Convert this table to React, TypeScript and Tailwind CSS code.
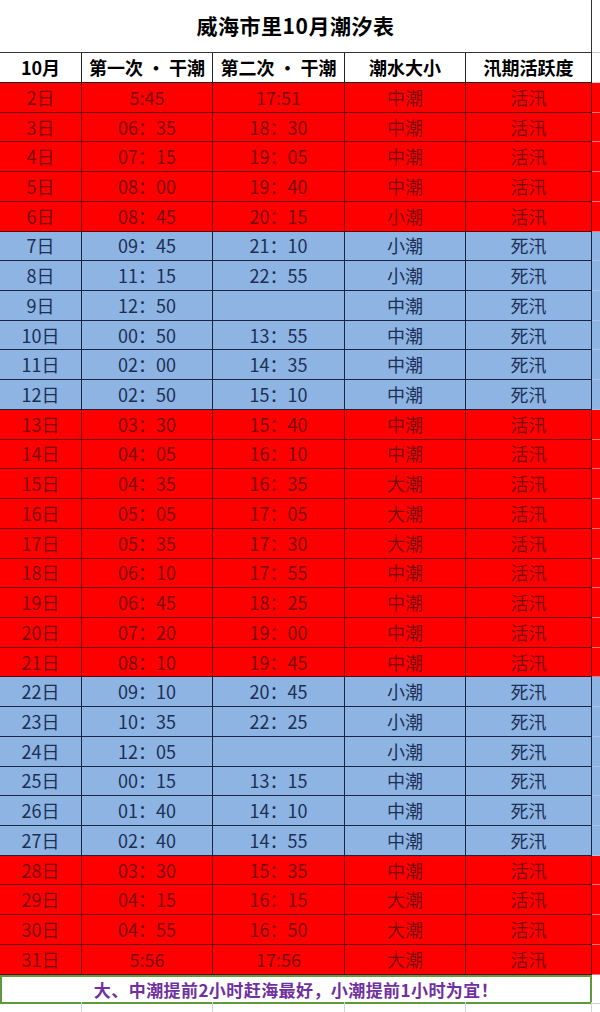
import React from "react";

type Row = [string, string, string, string, string];

const rows: Row[] = [
  ["2日", "5:45", "17:51", "中潮", "活汛"],
  ["3日", "06：35", "18：30", "中潮", "活汛"],
  ["4日", "07：15", "19：05", "中潮", "活汛"],
  ["5日", "08：00", "19：40", "中潮", "活汛"],
  ["6日", "08：45", "20：15", "小潮", "活汛"],
  ["7日", "09：45", "21：10", "小潮", "死汛"],
  ["8日", "11：15", "22：55", "小潮", "死汛"],
  ["9日", "12：50", "", "中潮", "死汛"],
  ["10日", "00：50", "13：55", "中潮", "死汛"],
  ["11日", "02：00", "14：35", "中潮", "死汛"],
  ["12日", "02：50", "15：10", "中潮", "死汛"],
  ["13日", "03：30", "15：40", "中潮", "活汛"],
  ["14日", "04：05", "16：10", "中潮", "活汛"],
  ["15日", "04：35", "16：35", "大潮", "活汛"],
  ["16日", "05：05", "17：05", "大潮", "活汛"],
  ["17日", "05：35", "17：30", "大潮", "活汛"],
  ["18日", "06：10", "17：55", "中潮", "活汛"],
  ["19日", "06：45", "18：25", "中潮", "活汛"],
  ["20日", "07：20", "19：00", "中潮", "活汛"],
  ["21日", "08：10", "19：45", "中潮", "活汛"],
  ["22日", "09：10", "20：45", "小潮", "死汛"],
  ["23日", "10：35", "22：25", "小潮", "死汛"],
  ["24日", "12：05", "", "小潮", "死汛"],
  ["25日", "00：15", "13：15", "中潮", "死汛"],
  ["26日", "01：40", "14：10", "中潮", "死汛"],
  ["27日", "02：40", "14：55", "中潮", "死汛"],
  ["28日", "03：30", "15：35", "中潮", "活汛"],
  ["29日", "04：15", "16：15", "大潮", "活汛"],
  ["30日", "04：55", "16：50", "大潮", "活汛"],
  ["31日", "5:56", "17:56", "大潮", "活汛"],
];

const cols = "grid grid-cols-[82px_131px_132px_121px_126px_8px]";
const font = { fontFamily: '"Noto Sans CJK SC", "Noto Sans", sans-serif' };

export default function App() {
  return (
    <div className="w-[600px] h-[1012px] overflow-hidden bg-white text-black" style={font}>
      {/* title */}
      <div className="grid grid-cols-[592px_8px] h-[53px]">
        <div className="flex items-center justify-center border-r border-b border-[#333] text-[21px] font-bold tracking-wide">
          威海市里10月潮汐表
        </div>
        <div className="border-b border-[#c8c8c8]" />
      </div>

      {/* header */}
      <div className={`${cols} h-[30px] text-[18px] font-bold`}>
        {["10月", "第一次 · 干潮", "第二次 · 干潮", "潮水大小", "汛期活跃度"].map((h, i) => (
          <div key={i} className="flex items-center justify-center border-r border-b border-[#222] whitespace-nowrap">
            {h}
          </div>
        ))}
        <div className="border-b border-[#d0d0d0]" />
      </div>

      {/* data */}
      {rows.map((r) => {
        const active = r[4] === "活汛";
        const cell = active
          ? "bg-[#ff0000] text-[#7a0606] border-[#6a0000]"
          : "bg-[#8db4e2] text-[#1c2f55] border-[#1a2440]";
        return (
          <div key={r[0]} className={`${cols} h-[29.73px] text-[18px]`}>
            {r.map((v, i) => (
              <div key={i} className={`flex items-center justify-center border-r border-b ${cell}`}>
                {v}
              </div>
            ))}
            <div
              className={
                active
                  ? "bg-[#ff0000] border-b border-[#ff7070]"
                  : "bg-[#8db4e2] border-b border-[#a8c4e8]"
              }
            />
          </div>
        );
      })}

      {/* footer */}
      <div className="grid grid-cols-[592px_8px] h-[27px]">
        <div className="flex items-center justify-center border-2 border-[#5e9a3c] text-[17px] font-bold text-[#7030a0] tracking-wide">
          大、中潮提前2小时赶海最好，小潮提前1小时为宜！
        </div>
        <div className="border-b border-[#d0d0d0]" />
      </div>
      <div className={`${cols} h-[10px]`}>
        {[0, 1, 2, 3, 4].map((i) => (
          <div key={i} className="border-r border-[#d4d4d4]" />
        ))}
        <div />
      </div>
    </div>
  );
}
